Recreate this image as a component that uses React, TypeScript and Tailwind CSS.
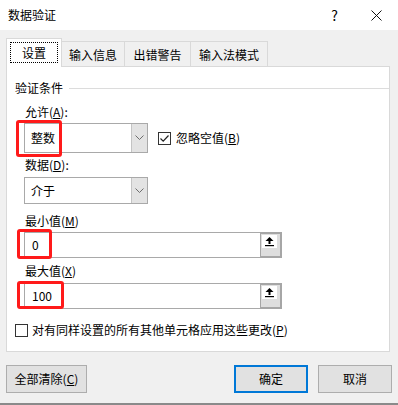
import React from "react";

const FONT = "font-['Microsoft_YaHei','Noto_Sans_CJK_SC',sans-serif]";

function Chevron() {
  return (
    <svg width="9" height="6" viewBox="0 0 9 6">
      <path d="M0.5 0.5 L4.5 4.5 L8.5 0.5" fill="none" stroke="#6d6d6d" strokeWidth="1" />
    </svg>
  );
}

function Select({ value, h }: { value: string; h: string }) {
  return (
    <div className={`flex w-[124px] ${h} border border-[#a9a9a9] bg-white`}>
      <div className="flex flex-1 items-center pl-[6px] text-[12px] leading-[16px] text-black">
        {value}
      </div>
      <div className="flex w-[16px] items-center justify-center border-l border-[#c4c4c4] bg-[#e3e3e3]">
        <Chevron />
      </div>
    </div>
  );
}

function RefInput({ value }: { value: string }) {
  return (
    <div className="flex h-[26px] w-[258px]">
      <div className="flex flex-1 items-center border border-r-0 border-[#a9a9a9] bg-white pl-[7px] text-[12px] leading-[16px] text-black">
        {value}
      </div>
      <div className="flex w-[22px] border-2 border-l border-[#a6a6a6] bg-[#dedede] px-[1px] pt-[1px]">
        <div className="flex h-[13px] w-[15px] items-center justify-center bg-white">
          <svg width="11" height="11" viewBox="0 0 11 11">
            <path d="M5.5 1 L9.5 5 L6.5 5 L6.5 8 L4.5 8 L4.5 5 L1.5 5 Z" fill="#000" />
            <rect x="1" y="9" width="9" height="1.2" fill="#000" />
          </svg>
        </div>
      </div>
    </div>
  );
}

function CheckBox({ checked }: { checked?: boolean }) {
  return (
    <div className="flex h-[13px] w-[13px] items-center justify-center border border-[#333] bg-white">
      {checked && (
        <svg width="11" height="11" viewBox="0 0 11 11">
          <path d="M1.5 5.5 L4.2 8.2 L9.5 2.5" fill="none" stroke="#222" strokeWidth="1.2" />
        </svg>
      )}
    </div>
  );
}

function Btn({ children, w, primary }: { children: React.ReactNode; w: string; primary?: boolean }) {
  return (
    <div
      className={`flex h-[28px] ${w} items-center justify-center bg-[#e1e1e1] text-[12px] leading-[16px] text-black ${
        primary ? "border-2 border-[#0078d7]" : "border border-[#adadad]"
      }`}
    >
      {children}
    </div>
  );
}

export default function App() {
  const tabs = [
    { label: "输入信息", w: "w-[63px]" },
    { label: "出错警告", w: "w-[66px]" },
    { label: "输入法模式", w: "w-[77px]" },
  ];
  return (
    <div className={`relative h-[405px] w-[398px] overflow-hidden border-b-2 border-[#8a8a8a] bg-[#f0f0f0] ${FONT}`}>
      {/* title bar */}
      <div className="flex h-[30px] items-center bg-white pl-[8px] pr-[16px] text-[12px] text-black">
        <span className="flex-1 leading-[16px]">数据验证</span>
        <span className="mr-[33px] text-[14px] leading-[16px]">?</span>
        <svg width="11" height="11" viewBox="0 0 11 11">
          <path d="M0.5 0.5 L10.5 10.5 M10.5 0.5 L0.5 10.5" stroke="#111" strokeWidth="1" />
        </svg>
      </div>

      {/* tabs */}
      <div className="mt-[8px] flex h-[29px] items-end pl-[6px]">
        <div className="relative z-10 flex h-[29px] w-[56px] border border-b-0 border-[#d9d9d9] bg-white p-[3px] pb-[4px]">
          <div className="flex flex-1 items-center justify-center border border-dotted border-black text-[12px] leading-[16px] text-black">
            设置
          </div>
        </div>
        {tabs.map((t) => (
          <div
            key={t.label}
            className={`flex h-[26px] ${t.w} items-center justify-center border border-l-0 border-b-0 border-[#d9d9d9] text-[12px] leading-[16px] text-black`}
          >
            {t.label}
          </div>
        ))}
      </div>

      {/* panel */}
      <div className="relative -mt-px ml-[6px] h-[286px] w-[384px] border border-[#d9d9d9] bg-white text-[12px] leading-[16px] text-black">
        <div className="mt-[13px] flex items-center pl-[8px]">
          <span>验证条件</span>
          <div className="ml-[6px] h-px flex-1 bg-[#dcdcdc]" />
        </div>

        <div className="mt-[8px] pl-[18px]">
          允许(<u>A</u>):
        </div>
        <div className="mt-[3px] flex items-center pl-[17px]">
          <Select value="整数" h="h-[30px]" />
          <div className="ml-[10px] flex items-center gap-[5px]">
            <CheckBox checked />
            <span>
              忽略空值(<u>B</u>)
            </span>
          </div>
        </div>

        <div className="mt-[4px] pl-[18px]">
          数据(<u>D</u>):
        </div>
        <div className="mt-[4px] pl-[17px]">
          <Select value="介于" h="h-[27px]" />
        </div>

        <div className="mt-[9px] pl-[18px]">
          最小值(<u>M</u>)
        </div>
        <div className="mt-[3px] pl-[17px]">
          <RefInput value="0" />
        </div>

        <div className="mt-[5px] pl-[18px]">
          最大值(<u>X</u>)
        </div>
        <div className="mt-[4px] pl-[17px]">
          <RefInput value="100" />
        </div>

        <div className="mt-[13px] flex items-center gap-[4px] pl-[8px]">
          <CheckBox />
          <span>
            对有同样设置的所有其他单元格应用这些更改(<u>P</u>)
          </span>
        </div>
      </div>

      {/* buttons */}
      <div className="mt-[13px] flex px-[6px]">
        <Btn w="w-[81px]">
          全部清除(<u>C</u>)
        </Btn>
        <div className="flex-1" />
        <Btn w="w-[74px]" primary>
          确定
        </Btn>
        <div className="w-[10px]" />
        <Btn w="w-[74px]">取消</Btn>
      </div>

      {/* red highlight boxes */}
      <div className="absolute left-[16px] top-[120px] h-[37px] w-[46px] rounded-[3px] border-[3px] border-[#ff1a1a]" />
      <div className="absolute left-[17px] top-[229px] h-[30px] w-[35px] rounded-[3px] border-[3px] border-[#ff1a1a]" />
      <div className="absolute left-[17px] top-[281px] h-[28px] w-[47px] rounded-[3px] border-[3px] border-[#ff1a1a]" />
    </div>
  );
}
